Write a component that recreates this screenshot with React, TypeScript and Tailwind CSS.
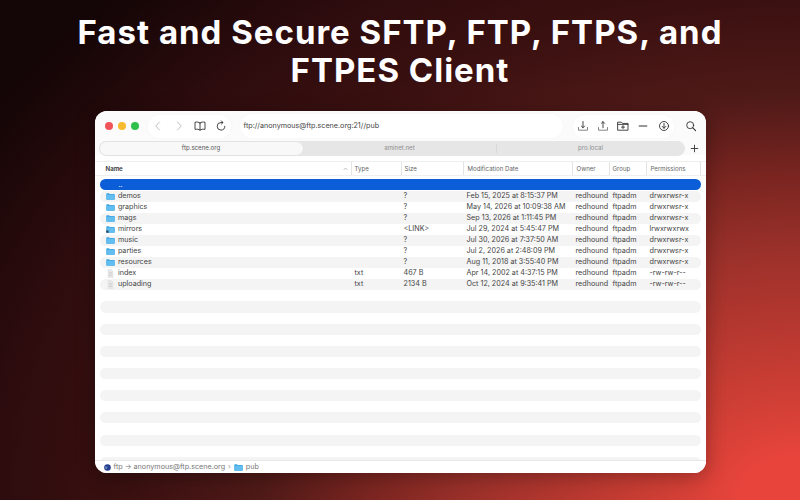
import React from "react";

type Row = {
  name: string;
  kind: "folder" | "link" | "file";
  type?: string;
  size: string;
  date: string;
  perms: string;
};

const rows: Row[] = [
  { name: "demos", kind: "folder", size: "?", date: "Feb 15, 2025 at 8:15:37 PM", perms: "drwxrwsr-x" },
  { name: "graphics", kind: "folder", size: "?", date: "May 14, 2026 at 10:09:38 AM", perms: "drwxrwsr-x" },
  { name: "mags", kind: "folder", size: "?", date: "Sep 13, 2026 at 1:11:45 PM", perms: "drwxrwsr-x" },
  { name: "mirrors", kind: "link", size: "<LINK>", date: "Jul 29, 2024 at 5:45:47 PM", perms: "lrwxrwxrwx" },
  { name: "music", kind: "folder", size: "?", date: "Jul 30, 2026 at 7:37:50 AM", perms: "drwxrwsr-x" },
  { name: "parties", kind: "folder", size: "?", date: "Jul 2, 2026 at 2:48:09 PM", perms: "drwxrwsr-x" },
  { name: "resources", kind: "folder", size: "?", date: "Aug 11, 2018 at 3:55:40 PM", perms: "drwxrwsr-x" },
  { name: "index", kind: "file", type: "txt", size: "467 B", date: "Apr 14, 2002 at 4:37:15 PM", perms: "-rw-rw-r--" },
  { name: "uploading", kind: "file", type: "txt", size: "2134 B", date: "Oct 12, 2024 at 9:35:41 PM", perms: "-rw-rw-r--" },
];

const cols = "grid grid-cols-[252px_50px_62px_109px_37px_37px_1fr]";

const Folder = ({ link }: { link?: boolean }) => (
  <svg width="9" height="7" viewBox="0 0 9 7" className="shrink-0">
    <path d="M.3 1C.3.5.6.2 1 .2h2l.7.7H8c.5 0 .8.3.8.8v4.3c0 .5-.3.8-.8.8H1c-.4 0-.7-.3-.7-.8z" fill="#3fa4e0" />
    <path d="M.3 1.8h8.5v3.9c0 .6-.3.9-.8.9H1c-.4 0-.7-.3-.7-.9z" fill="#62bdf0" />
    {link && <path d="M.3 4.6h2.2v2.2H.3z" fill="#24405c" />}
  </svg>
);

const FileIcon = () => (
  <svg width="9" height="9" viewBox="0 0 9 9" className="shrink-0">
    <path d="M2 .4h3.2l1.8 1.8v6.4H2z" fill="#e8e8e8" stroke="#d6d6d6" strokeWidth=".4" />
    <path d="M3 3.5h3M3 5h3M3 6.5h3" stroke="#c4c4c4" strokeWidth=".5" />
  </svg>
);

const Btn = ({ children }: { children: React.ReactNode }) => (
  <svg width="12" height="12" viewBox="0 0 12 12" fill="none" stroke="#333" strokeWidth="0.9" strokeLinecap="round" strokeLinejoin="round" className="shrink-0">
    {children}
  </svg>
);

const HeaderCell = ({ children, first, wide }: { children: React.ReactNode; first?: boolean; wide?: boolean }) => (
  <div className={`flex h-[13px] items-center border-r border-[#e4e4e4] ${first ? "justify-between pl-[6px] pr-[3px]" : wide ? "pl-[4px]" : "pl-[3px]"}`}>
    {children}
  </div>
);

export default function App() {
  return (
    <div className="flex h-[500px] w-[800px] flex-col items-center overflow-hidden bg-[radial-gradient(960px_720px_at_100%_100%,#e8443c_0%,#e8443c_6%,#d03f35_14%,#9a302a_35%,#7a2520_45%,#4f1a18_56%,#3a1010_70%,#2e0c0e_83%,#140506_100%)] font-['Inter',sans-serif]">
      <h1 className="mt-[13px] w-full text-center text-[33px] leading-[38px] font-bold tracking-[1px] text-white">
        Fast and Secure SFTP, FTP, FTPS, and
        <br />
        FTPES Client
      </h1>

      <div className="mt-[22px] flex h-[362px] w-[611px] flex-col overflow-hidden rounded-[12px] bg-white text-[7.2px] text-[#444] shadow-[0_4px_20px_rgba(0,0,0,0.3)]">
        {/* toolbar */}
        <div className="flex h-[30px] shrink-0 items-center bg-[#fbfbfb] pl-[10px] pr-[9px]">
          <div className="flex gap-[5px]">
            <span className="h-[8px] w-[8px] rounded-full bg-[#f0535a]" />
            <span className="h-[8px] w-[8px] rounded-full bg-[#f6bb2e]" />
            <span className="h-[8px] w-[8px] rounded-full bg-[#2fc14b]" />
          </div>
          <div className="ml-[9px] flex h-[23px] items-center gap-[9px] rounded-full bg-white px-[4px] shadow-[0_0_3px_rgba(0,0,0,0.03)]">
            <Btn><path d="M7.5 2 3.8 6l3.7 4" stroke="#b9b9b9" /></Btn>
            <Btn><path d="M4.5 2 8.2 6l-3.7 4" stroke="#b9b9b9" /></Btn>
            <Btn><path d="M6 3C5 2 3 1.8 1 2.2v7.2c2-.4 4-.2 5 .8 1-1 3-1.2 5-.8V2.2C9 1.8 7 2 6 3zM6 3v7.2" /></Btn>
            <Btn><path d="M9.8 6.3A3.8 3.8 0 1 1 6 2.5h1.6M6.4.9 8 2.5 6.4 4.1" /></Btn>
          </div>
          <div className="ml-[9px] flex h-[24px] w-[323px] items-center rounded-full bg-white pl-[4px] text-[7.2px] text-[#444] shadow-[0_0_3px_rgba(0,0,0,0.03)]">
            ftp://anonymous@ftp.scene.org:21//pub
          </div>
          <div className="ml-auto flex items-center">
            <div className="flex h-[23px] items-center gap-[8.2px] rounded-full bg-white px-[4px] shadow-[0_0_3px_rgba(0,0,0,0.03)]">
              <Btn><path d="M6 1.5v6.2M4.4 6.1 6 7.7l1.6-1.6" /><path d="M1.5 7.5v2.7h9V7.5" stroke="#777" /></Btn>
              <Btn><path d="M6 7.7V1.7M4.4 3.3 6 1.7l1.6 1.6" /><path d="M1.5 7.5v2.7h9V7.5" stroke="#777" /></Btn>
              <Btn><path d="M1 2.2h3.4l1 1.2H11v6.8H1zM1 4.4h10M6 5.6v3M4.5 7.1h3" /></Btn>
              <Btn><path d="M2.2 6h7.6" strokeWidth="1.1" /></Btn>
              <Btn><circle cx="6" cy="6" r="4.5" /><path d="M6 3.4v5M4.2 6.4 6 8.2l1.8-1.8" /></Btn>
            </div>
            <div className="ml-[11px]">
              <Btn><circle cx="5.2" cy="5.2" r="3.5" /><path d="m7.8 7.8 2.8 2.8" strokeWidth="1.1" /></Btn>
            </div>
          </div>
        </div>

        {/* tabs */}
        <div className="flex h-[14px] shrink-0 items-center bg-[#fbfbfb] pl-[4px] pr-[7px] text-[6.1px]">
          <div className="flex h-[15px] w-[586px] items-center rounded-full bg-[#e6e6e6] text-[#8d8d8d]">
            <div className="flex h-full w-[205px] items-center justify-center rounded-full border border-[#e2e2e2] bg-[#f8f8f8] text-[#555]">ftp.scene.org</div>
            <div className="flex h-[9px] w-[193px] items-center justify-center border-r border-[#d9d9d9]">aminet.net</div>
            <div className="flex flex-1 items-center justify-center">pro.local</div>
          </div>
          <svg width="9" height="9" viewBox="0 0 9 9" className="ml-auto" stroke="#333" strokeWidth="0.9" strokeLinecap="round">
            <path d="M4.5 1.2v6.6M1.2 4.5h6.6" />
          </svg>
        </div>

        {/* column header */}
        <div className={`${cols} mt-[6px] h-[15px] shrink-0 items-center border-y border-[#efefef] px-[5px] text-[6.1px] text-[#666]`}>
          <HeaderCell first>
            <span className="font-semibold text-[#333]">Name</span>
            <svg width="5" height="4" viewBox="0 0 5 4" fill="none" stroke="#999" strokeWidth="0.6"><path d="m.6 3 1.9-2 1.9 2" /></svg>
          </HeaderCell>
          <HeaderCell>Type</HeaderCell>
          <HeaderCell>Size</HeaderCell>
          <HeaderCell wide>Modification Date</HeaderCell>
          <HeaderCell wide>Owner</HeaderCell>
          <HeaderCell>Group</HeaderCell>
          <HeaderCell wide>Permissions</HeaderCell>
        </div>

        {/* rows */}
        <div className="mt-[3px] flex min-h-0 flex-1 flex-col overflow-hidden px-[5px]">
          <div className="mb-[0.5px] flex h-[11px] shrink-0 items-center rounded-full bg-[#0b5ed7] pl-[19px] leading-none text-white">
            ..
          </div>
          {rows.map((r, i) => (
            <div key={r.name} className={`${cols} h-[11.1px] shrink-0 items-center rounded-full ${i % 2 === 0 ? "bg-[#f4f4f4]" : ""}`}>
              <div className="flex items-center gap-[3.4px] pl-[6px]">
                {r.kind === "file" ? <FileIcon /> : <Folder link={r.kind === "link"} />}
                <span>{r.name}</span>
              </div>
              <div className="pl-[3px]">{r.type}</div>
              <div className="pl-[2px]">{r.size}</div>
              <div className="whitespace-nowrap pl-[3px]">{r.date}</div>
              <div className="pl-[3px]">redhound</div>
              <div className="pl-[3px]">ftpadm</div>
              <div className="pl-[3px]">{r.perms}</div>
            </div>
          ))}
          {Array.from({ length: 8 }).map((_, i) => (
            <div key={i} className="mt-[11.1px] h-[11.1px] shrink-0 rounded-full bg-[#f4f4f4]" />
          ))}
        </div>

        {/* status bar */}
        <div className="flex h-[13px] shrink-0 items-center gap-[3px] border-t border-[#e8e8e8] bg-white pl-[9px] text-[#777]">
          <svg width="7" height="7" viewBox="0 0 7 7"><circle cx="3.5" cy="3.5" r="3.3" fill="#24408e" /><path d="M1 2.5h2.5L3 5 1.5 5z" fill="#6d83c4" /></svg>
          <span>ftp -&gt; anonymous@ftp.scene.org</span>
          <span className="text-[#999]">›</span>
          <Folder />
          <span>pub</span>
        </div>
      </div>
    </div>
  );
}
